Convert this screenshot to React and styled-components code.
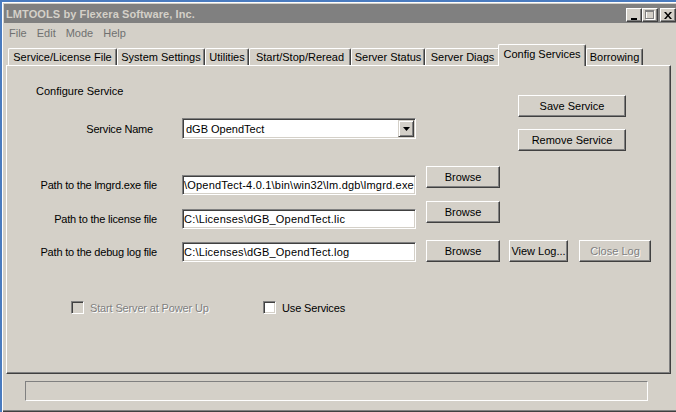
import React from 'react';
import styled, { createGlobalStyle } from 'styled-components';

const face = '#d4d0c8';
const shade = '#808080';
const dark = '#404040';

const GlobalStyle = createGlobalStyle`
    html, body {
        margin: 0;
        padding: 0;
    }
    body {
        width: 676px;
        height: 412px;
        overflow: hidden;
        background: #4a7bbf;
        font-family: "Liberation Sans", Arial, sans-serif;
        font-size: 11px;
        color: #000;
    }
`;

const Window = styled.div`
    box-sizing: border-box;
    margin: 2px 0 0 2px;
    width: 678px;
    height: 410px;
    padding: 2px 0 0 2px;
    background: ${face};
    box-shadow: inset 1px 1px #fff, inset 0 -1px ${dark}, inset 0 -2px ${shade};
    display: flex;
    flex-direction: column;
`;

const TitleBar = styled.div`
    height: 19px;
    padding: 0 4px 0 2px;
    background: ${shade};
    display: flex;
    align-items: center;
    justify-content: space-between;
`;

const Caption = styled.span`
    color: ${face};
    font-weight: bold;
    font-size: 11px;
    letter-spacing: 0.1px;
`;

const Controls = styled.div`
    display: flex;
    align-self: flex-end;
    margin-bottom: 1px;
`;

const CtlButton = styled.div`
    box-sizing: border-box;
    width: 16px;
    height: 14px;
    margin-left: ${p => p.$gap || 0}px;
    background: ${face};
    border: 1px solid;
    border-color: #fff ${dark} ${dark} #fff;
    box-shadow: inset -1px -1px ${shade};
    display: flex;
    align-items: center;
    justify-content: center;
    svg { display: block; }
`;

const MenuBar = styled.div`
    height: 20px;
    padding-left: 5px;
    display: flex;
    align-items: center;
    gap: 10px;
`;

const MenuItem = styled.span`
    color: #707070;
`;

const TabStrip = styled.div`
    height: 22px;
    padding-left: 4px;
    display: flex;
    align-items: flex-end;
    position: relative;
    z-index: 1;
`;

const Tab = styled.div`
    box-sizing: border-box;
    width: ${p => p.$w}px;
    height: ${p => (p.$active ? 22 : 17)}px;
    margin: ${p => (p.$active ? '0 0 -1px -2px' : '0')};
    padding-bottom: ${p => (p.$active ? 3 : 0)}px;
    background: ${face};
    border-top: 1px solid #fff;
    border-left: 1px solid #fff;
    border-right: 1px solid ${dark};
    border-radius: 2px 2px 0 0;
    box-shadow: inset -1px 0 ${shade};
    display: flex;
    align-items: center;
    justify-content: center;
    white-space: nowrap;
`;

const Panel = styled.div`
    box-sizing: border-box;
    width: 665px;
    height: 309px;
    margin-left: 2px;
    border: 1px solid;
    border-color: #fff ${dark} ${dark} #fff;
    box-shadow: inset -1px -1px ${shade};
    display: flex;
    flex-direction: column;
`;

const TopSection = styled.div`
    display: flex;
    justify-content: space-between;
    padding-right: 44px;
`;

const LeftBlock = styled.div`
    padding-top: 19px;
    display: flex;
    flex-direction: column;
`;

const Heading = styled.div`
    margin-left: 29px;
    line-height: 13px;
`;

const RightBlock = styled.div`
    padding-top: 29px;
    display: flex;
    flex-direction: column;
    gap: 12px;
`;

const Row = styled.div`
    margin-top: ${p => p.$top}px;
    display: flex;
    align-items: flex-start;
`;

const Field = styled.div`
    margin-top: ${p => p.$offset || 0}px;
    display: flex;
    align-items: center;
`;

const Label = styled.label`
    box-sizing: border-box;
    width: 150px;
    padding-right: ${p => p.$pad || 0}px;
    margin-right: 25px;
    text-align: right;
    white-space: nowrap;
    letter-spacing: -0.2px;
`;

const Sunken = styled.div`
    box-sizing: border-box;
    width: 234px;
    height: ${p => p.$h || 20}px;
    background: #fff;
    border: 1px solid;
    border-color: ${shade} #fff #fff ${shade};
    box-shadow: inset 1px 1px ${dark}, inset -1px -1px ${face};
    display: flex;
    align-items: center;
    padding: 0 2px 0 ${p => p.$pl || 2}px;
    overflow: hidden;
    white-space: nowrap;
    letter-spacing: ${p => (p.$path ? '0.2px' : 'normal')};
`;

const ComboText = styled.span`
    flex: 1;
`;

const ArrowButton = styled.div`
    box-sizing: border-box;
    width: 16px;
    height: 17px;
    margin-right: -1px;
    background: ${face};
    border: 1px solid;
    border-color: ${face} ${dark} ${dark} ${face};
    box-shadow: inset 1px 1px #fff, inset -1px -1px ${shade};
    display: flex;
    align-items: center;
    justify-content: center;
`;

const Button = styled.div`
    box-sizing: border-box;
    width: ${p => p.$w}px;
    height: 22px;
    margin-left: ${p => p.$ml || 0}px;
    background: ${face};
    border: 1px solid;
    border-color: #fff ${dark} ${dark} #fff;
    box-shadow: inset -1px -1px ${shade};
    display: flex;
    align-items: center;
    justify-content: center;
    white-space: nowrap;
    color: ${p => (p.$disabled ? shade : '#000')};
    text-shadow: ${p => (p.$disabled ? '1px 1px #fff' : 'none')};
`;

const CheckRow = styled.div`
    margin-top: 39px;
    padding-left: 64px;
    display: grid;
    grid-template-columns: 192px auto;
`;

const CheckItem = styled.div`
    display: flex;
    align-items: center;
    gap: 6px;
    letter-spacing: -0.15px;
    color: ${p => (p.$disabled ? shade : '#000')};
    text-shadow: ${p => (p.$disabled ? '1px 1px #fff' : 'none')};
`;

const Box = styled.span`
    box-sizing: border-box;
    width: 13px;
    height: 13px;
    background: ${p => (p.$disabled ? face : '#fff')};
    border: 1px solid;
    border-color: ${shade} #fff #fff ${shade};
    box-shadow: inset 1px 1px ${dark}, inset -1px -1px ${face};
`;

const StatusBox = styled.div`
    box-sizing: border-box;
    width: 623px;
    height: 20px;
    margin: 7px 0 0 21px;
    border: 1px solid;
    border-color: ${shade} #fff #fff ${shade};
`;

const tabs = [
    ['Service/License File', 109],
    ['System Settings', 88],
    ['Utilities', 44],
    ['Start/Stop/Reread', 102],
    ['Server Status', 74],
    ['Server Diags', 75],
    ['Config Services', 88, true],
    ['Borrowing', 57],
];

const DownArrow = () => (
    <svg width="7" height="4" viewBox="0 0 7 4">
        <polygon points="0,0 7,0 3.5,4" fill="#000" />
    </svg>
);

export default function App() {
    return (
        <>
            <GlobalStyle />
            <Window>
                <TitleBar>
                    <Caption>LMTOOLS by Flexera Software, Inc.</Caption>
                    <Controls>
                        <CtlButton>
                            <svg width="8" height="9" viewBox="0 0 8 9">
                                <rect x="1" y="7" width="6" height="2" fill="#000" />
                            </svg>
                        </CtlButton>
                        <CtlButton>
                            <svg width="10" height="10" viewBox="0 0 10 10">
                                <rect x="1.5" y="1.5" width="8" height="8" fill="none" stroke="#fff" />
                                <rect x="0.5" y="0.5" width="8" height="8" fill="none" stroke={shade} />
                                <rect x="0" y="1" width="9" height="1" fill={shade} />
                            </svg>
                        </CtlButton>
                        <CtlButton $gap={2}>
                            <svg width="8" height="7" viewBox="0 0 8 7">
                                <path d="M0 0 L2 0 L4 2.5 L6 0 L8 0 L5 3.5 L8 7 L6 7 L4 4.5 L2 7 L0 7 L3 3.5 Z" fill="#000" />
                            </svg>
                        </CtlButton>
                    </Controls>
                </TitleBar>
                <MenuBar>
                    <MenuItem>File</MenuItem>
                    <MenuItem>Edit</MenuItem>
                    <MenuItem>Mode</MenuItem>
                    <MenuItem>Help</MenuItem>
                </MenuBar>
                <TabStrip>
                    {tabs.map(([name, w, active]) => (
                        <Tab key={name} $w={w} $active={active}>{name}</Tab>
                    ))}
                </TabStrip>
                <Panel>
                    <TopSection>
                        <LeftBlock>
                            <Heading>Configure Service</Heading>
                            <Row $top={20}>
                                <Field>
                                    <Label $pad={4}>Service Name</Label>
                                    <Sunken $h={21} $pl={3}>
                                        <ComboText>dGB OpendTect</ComboText>
                                        <ArrowButton><DownArrow /></ArrowButton>
                                    </Sunken>
                                </Field>
                            </Row>
                        </LeftBlock>
                        <RightBlock>
                            <Button $w={108}>Save Service</Button>
                            <Button $w={108}>Remove Service</Button>
                        </RightBlock>
                    </TopSection>
                    <Row $top={15}>
                        <Field $offset={9}>
                            <Label>Path to the lmgrd.exe file</Label>
                            <Sunken $path $pl={1}>\OpendTect-4.0.1\bin\win32\lm.dgb\lmgrd.exe</Sunken>
                        </Field>
                        <Button $w={74} $ml={10}>Browse</Button>
                    </Row>
                    <Row $top={6}>
                        <Field $offset={8}>
                            <Label>Path to the license file</Label>
                            <Sunken $path $pl={1}>C:\Licenses\dGB_OpendTect.lic</Sunken>
                        </Field>
                        <Button $w={74} $ml={10}>Browse</Button>
                    </Row>
                    <Row $top={11}>
                        <Field $offset={2}>
                            <Label>Path to the debug log file</Label>
                            <Sunken $path $pl={1}>C:\Licenses\dGB_OpendTect.log</Sunken>
                        </Field>
                        <Button $w={74} $ml={10}>Browse</Button>
                        <Button $w={59} $ml={9}>View Log...</Button>
                        <Button $w={72} $ml={11} $disabled>Close Log</Button>
                    </Row>
                    <CheckRow>
                        <CheckItem $disabled>
                            <Box $disabled />
                            Start Server at Power Up
                        </CheckItem>
                        <CheckItem>
                            <Box />
                            Use Services
                        </CheckItem>
                    </CheckRow>
                </Panel>
                <StatusBox />
            </Window>
        </>
    );
}
